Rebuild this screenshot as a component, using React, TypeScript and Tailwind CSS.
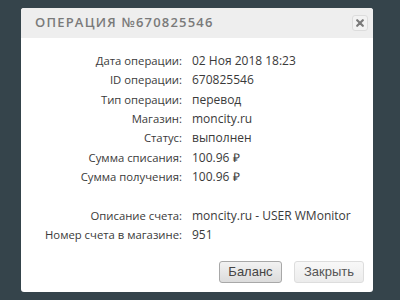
import React from "react";

const rows: [string, string][] = [
  ["Дата операции:", "02 Ноя 2018 18:23"],
  ["ID операции:", "670825546"],
  ["Тип операции:", "перевод"],
  ["Магазин:", "moncity.ru"],
  ["Статус:", "выполнен"],
  ["Сумма списания:", "100.96 ₽"],
  ["Сумма получения:", "100.96 ₽"],
  ["", ""],
  ["Описание счета:", "moncity.ru - USER WMonitor"],
  ["Номер счета в магазине:", "951"],
];

const App = () => {
  return (
    <div className="w-[400px] h-[300px] bg-[#35444b] overflow-hidden pt-[8px] pl-[21px]">
      <div className="w-[352px] h-[284px] bg-white rounded-[3px] flex flex-col overflow-hidden">
        <div className="h-[30px] bg-[#eeeeee] flex items-center justify-between pl-[14px] pr-[5px]">
          <span
            className="text-[13px] font-semibold tracking-[1.2px] text-[#7a7a7a]"
            style={{ fontFamily: '"Open Sans", sans-serif' }}
          >
            ОПЕРАЦИЯ №670825546
          </span>
          <button className="w-[16px] h-[16px] rounded-[3px] border border-[#dcdcdc] bg-[#f2f2f2] flex items-center justify-center">
            <svg width="8" height="8" viewBox="0 0 8 8">
              <path
                d="M1.2 1.2L6.8 6.8M6.8 1.2L1.2 6.8"
                stroke="#7a7a7a"
                strokeWidth="2.2"
                strokeLinecap="round"
              />
            </svg>
          </button>
        </div>

        <div
          className="pt-[13px] grid grid-cols-[161px_1fr] gap-x-[10px] text-[12px] leading-[19.33px] text-[#3a3a3a]"
          style={{ fontFamily: '"Open Sans", sans-serif' }}
        >
          {rows.map(([label, value], i) => (
            <React.Fragment key={i}>
              <div className="text-right whitespace-nowrap text-[11.3px]">
                {label || "\u00a0"}
              </div>
              <div className="whitespace-nowrap">{value}</div>
            </React.Fragment>
          ))}
        </div>

        <div
          className="mt-auto flex justify-end gap-[12px] pr-[9px] pb-[9px] text-[13px]"
          style={{ fontFamily: '"Liberation Sans", Arial, sans-serif' }}
        >
          <button className="w-[63px] h-[22px] rounded-[3px] border border-[#a8a8a8] bg-gradient-to-b from-[#f2f2f2] to-[#dcdcdc] text-[#444]">
            Баланс
          </button>
          <button className="w-[70px] h-[22px] rounded-[3px] border border-[#dddddd] bg-gradient-to-b from-[#f8f8f8] to-[#ececec] text-[#555]">
            Закрыть
          </button>
        </div>
      </div>
    </div>
  );
};

export default App;
